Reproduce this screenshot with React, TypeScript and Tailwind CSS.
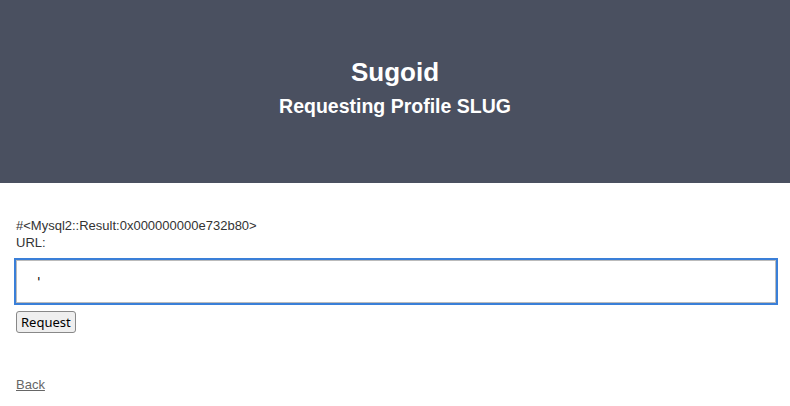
export default function App() {
  return (
    <div className="min-h-[406px] bg-white font-['Liberation_Sans',Arial,sans-serif]">
      <header className="flex h-[183px] flex-col items-center justify-center bg-[#4a5060] pb-[9px] text-white">
        <h1 className="text-[26px] font-bold leading-[32px]">Sugoid</h1>
        <h2 className="mt-[6px] text-[19.5px] font-bold leading-[24px]">Requesting Profile SLUG</h2>
      </header>

      <main className="px-4 pt-[34px] text-[13px] text-[#333]">
        <p className="leading-[17px]">#&lt;Mysql2::Result:0x000000000e732b80&gt;</p>
        <label className="block leading-[17px]">URL:</label>
        <input
          defaultValue="'"
          className="mt-[9px] block h-[43px] w-[760px] border border-[#bbb] bg-white px-[20px] font-['DejaVu_Sans',sans-serif] text-[13px] text-black outline outline-2 outline-[#3a7fd8]"
        />
        <button className="mt-[8px] block h-[22px] rounded-[3px] border border-[#888] bg-[#efefef] px-[4px] font-['Noto_Sans',sans-serif] text-[13px] leading-[18px] text-black">
          Request
        </button>
        <a href="#" className="mt-[43px] block w-fit text-[13px] leading-[17px] text-[#666] underline">
          Back
        </a>
      </main>
    </div>
  );
}
